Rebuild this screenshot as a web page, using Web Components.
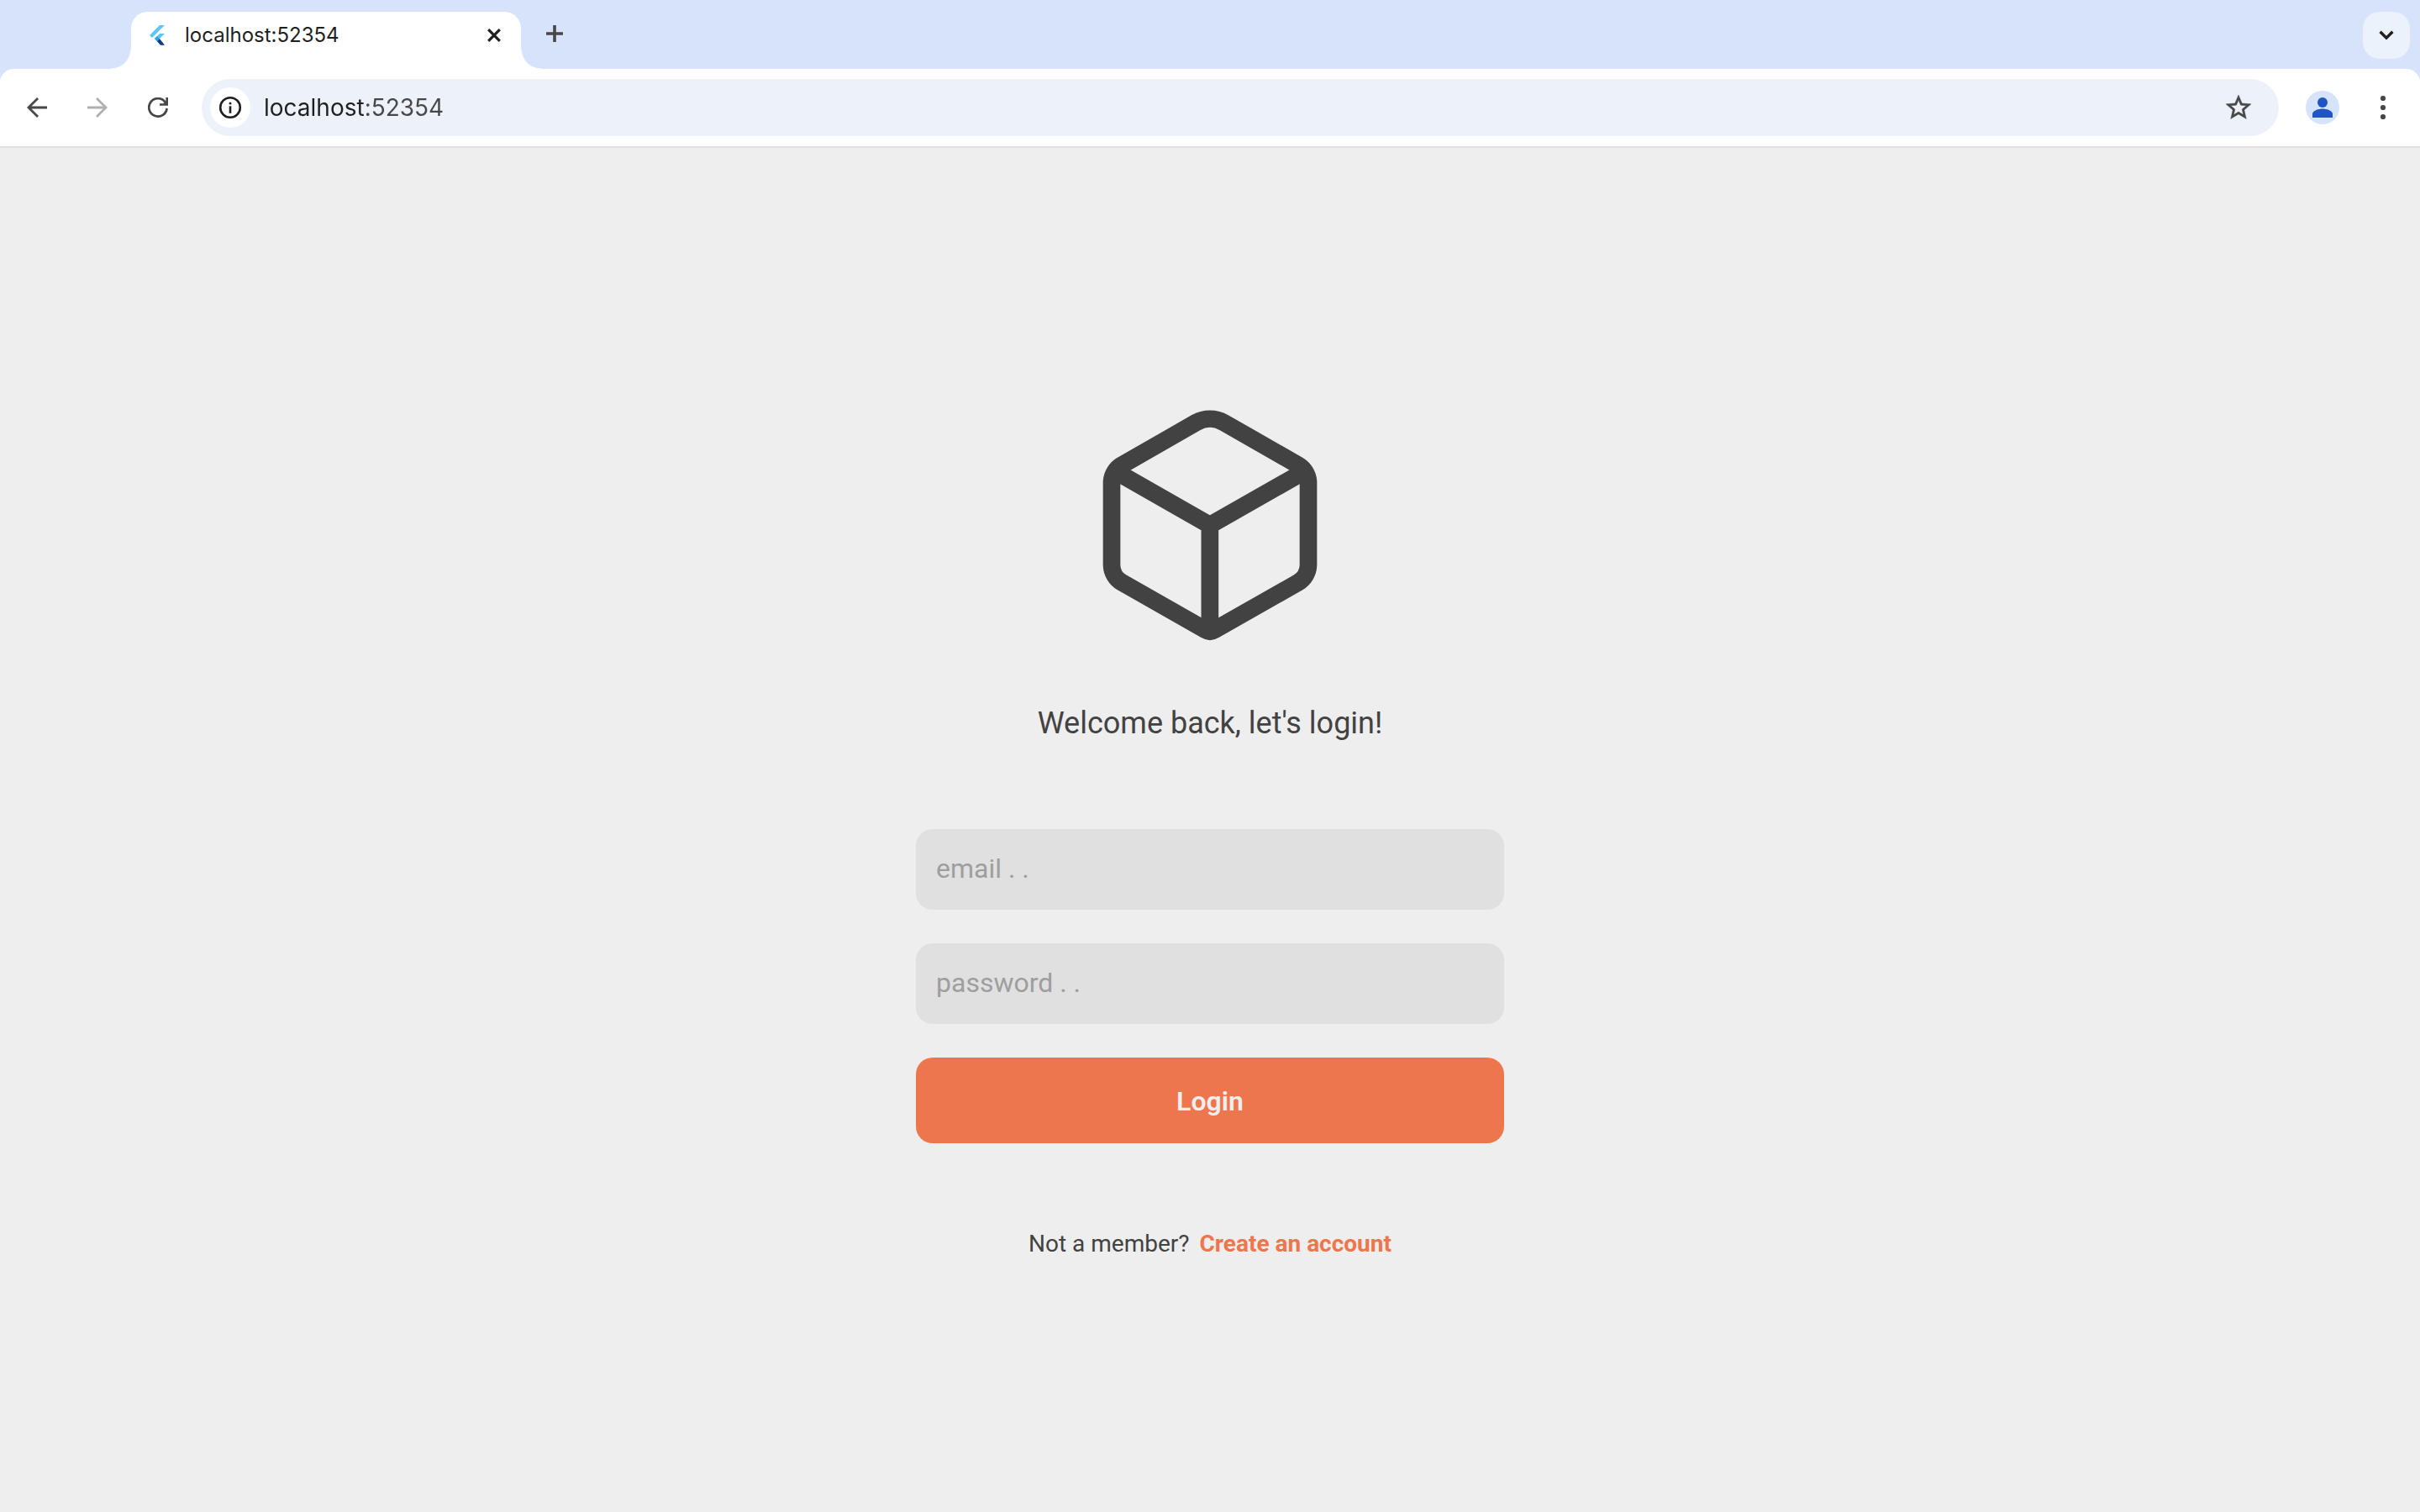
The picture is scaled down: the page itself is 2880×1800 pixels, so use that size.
<!DOCTYPE html>
<html lang="en">
<head>
<meta charset="utf-8">
<title>localhost:52354</title>
<style>
  html, body { height: 100%; margin: 0; }
  body { font-family: Roboto, sans-serif; background: #eeeeee; }
</style>
</head>
<body>
<browser-window>
  <tab-strip slot="chrome"><browser-tab>localhost:52354</browser-tab></tab-strip>
  <browser-toolbar slot="chrome"></browser-toolbar>
  <login-page>
    <login-field name="email" type="email" hint="email . ."></login-field>
    <login-field name="password" type="password" hint="password . ."></login-field>
    <submit-button>Login</submit-button>
  </login-page>
</browser-window>

<script>
const define = (name, html, setup) => {
  const template = document.createElement('template');
  template.innerHTML = html;
  customElements.define(name, class extends HTMLElement {
    constructor() {
      super();
      this.attachShadow({ mode: 'open' }).append(template.content.cloneNode(true));
    }
    connectedCallback() { if (setup) setup(this, this.shadowRoot); }
  });
};

const plainButton = `
  button { border: 0; margin: 0; padding: 0; background: none; color: inherit; font: inherit;
    display: flex; align-items: center; justify-content: center; cursor: pointer; }
  svg { display: block; }`;

define('browser-window', `
  <style>
    :host { display: flex; flex-direction: column; min-height: 100vh; }
    header { background: #d7e2fb; border-bottom: 2px solid #e1e1e1; }
    main { flex: 1; display: flex; flex-direction: column; }
  </style>
  <header><slot name="chrome"></slot></header>
  <main><slot></slot></main>`);

define('tab-strip', `
  <style>
    :host { display: flex; height: 82px; align-items: flex-end; padding: 0 12px 0 132px; box-sizing: border-box; }
    .flare { width: 24px; height: 24px; }
    .left { background: radial-gradient(circle at 0 0, transparent 23px, #fff 24px); }
    .right { background: radial-gradient(circle at 100% 0, transparent 23px, #fff 24px); }
    ${plainButton}
    .new { align-self: flex-start; width: 32px; height: 32px; margin-top: 24px; }
    .search { align-self: flex-start; width: 56px; height: 56px; margin: 14px 0 0 auto; border-radius: 20px; background: #ebf2fc; }
  </style>
  <div class="flare left"></div>
  <slot></slot>
  <div class="flare right"></div>
  <button class="new" aria-label="New tab">
    <svg width="32" height="32" viewBox="0 0 32 32" fill="none" stroke="#474747" stroke-width="3.6"><path d="M16 6v20M6 16h20"/></svg>
  </button>
  <button class="search" aria-label="Search tabs">
    <svg width="24" height="24" viewBox="0 0 24 24" fill="none" stroke="#1f1f1f" stroke-width="3.4"><path d="M4.6 7.8L12 15.2l7.4-7.4"/></svg>
  </button>`);

define('browser-tab', `
  <style>
    :host { display: flex; align-items: center; width: 464px; height: 68px; padding: 0 16px 12px;
      box-sizing: border-box; background: #fff; border-radius: 20px 20px 0 0;
      font: 24px/32px Inter, sans-serif; color: #1f1f1f; }
    .title { flex: 1; margin-left: 16px; }
    ${plainButton}
    button { width: 32px; height: 32px; }
  </style>
  <svg width="32" height="32" viewBox="0 0 32 32">
    <path fill="#5fc4f8" d="M24 4h-6L6 16l3 3z"/>
    <path fill="#5fc4f8" d="M24 14h-6l-6 6 3 3z"/>
    <path fill="#29a5ea" d="M12 20l3-3 3 3-3 3.400z"/>
    <path fill="#0d3a8c" d="M15 23.200l3-3.200 6 7.800h-5z"/>
    <path fill="#fff" d="M18 20h6v5.400z"/>
  </svg>
  <span class="title"><slot></slot></span>
  <button aria-label="Close tab">
    <svg width="32" height="32" viewBox="0 0 32 32" fill="none" stroke="#1f1f1f" stroke-width="3.2"><path d="M9.2 9.2l13.6 13.6M22.8 9.2L9.2 22.8"/></svg>
  </button>`);

define('browser-toolbar', `
  <style>
    :host { display: flex; align-items: center; gap: 16px; height: 92px; padding: 0 16px;
      box-sizing: border-box; background: #fff; border-radius: 16px 16px 0 0; color: #474747; }
    ${plainButton}
    button { width: 56px; height: 56px; flex: none; }
    button:disabled { color: #b0b0b0; }
    address-bar { flex: 1; margin: 0 8px; }
  </style>
  <button aria-label="Back">
    <svg width="24" height="24" viewBox="0 0 24 24" fill="none" stroke="currentColor" stroke-width="2.8"><path d="M24 12H2M13 1L2 12l11 11"/></svg>
  </button>
  <button aria-label="Forward" disabled>
    <svg width="24" height="24" viewBox="0 0 24 24" fill="none" stroke="currentColor" stroke-width="2.8"><path d="M0 12h22M11 1l11 11-11 11"/></svg>
  </button>
  <button aria-label="Reload">
    <svg width="24" height="24" viewBox="0 0 24 24"><path fill="none" stroke="currentColor" stroke-width="2.7" d="M22.6 13A10.7 10.7 0 1 1 20.6 5.6"/><path fill="currentColor" d="M24 0v9.8H14V7.2h4.4l3-2.6V0z"/></svg>
  </button>
  <address-bar></address-bar>
  <button aria-label="Profile">
    <svg width="40" height="40" viewBox="0 0 40 40"><circle cx="20" cy="20" r="20" fill="#d7e2fb"/><g fill="#1f55c4"><circle cx="20" cy="14" r="6"/><path d="M8 32v-4.4C8 23.4 15.6 21.4 20 21.4s12 2 12 6.2V32z"/></g></svg>
  </button>
  <button aria-label="Menu">
    <svg width="32" height="32" viewBox="0 0 32 32" fill="currentColor"><circle cx="16" cy="5" r="3.1"/><circle cx="16" cy="16" r="3.1"/><circle cx="16" cy="27" r="3.1"/></svg>
  </button>`);

define('address-bar', `
  <style>
    :host { display: flex; align-items: center; height: 68px; padding: 0 20px 0 10px; box-sizing: border-box;
      background: #edf2fa; border-radius: 34px; --host-width: 120px; }
    ${plainButton}
    .info { width: 48px; height: 48px; border-radius: 24px; background: #fff; }
    .star { width: 56px; height: 56px; color: #474747; }
    input { flex: 1; min-width: 0; height: 40px; margin-left: 16px; padding: 0; border: 0; outline: 0;
      font: 28px/40px Inter, sans-serif; color: #1f1f1f; caret-color: #1f1f1f;
      background: linear-gradient(to right, #1f1f1f var(--host-width), #474747 var(--host-width));
      -webkit-background-clip: text; background-clip: text; -webkit-text-fill-color: transparent; }
  </style>
  <button class="info" aria-label="Site information">
    <svg width="32" height="32" viewBox="0 0 32 32"><circle cx="16" cy="16" r="11.8" fill="none" stroke="#1f1f1f" stroke-width="2.6"/><circle cx="16" cy="11" r="1.5" fill="#1f1f1f"/><path d="M16 14.3v8.500" stroke="#1f1f1f" stroke-width="2.6"/></svg>
  </button>
  <input type="text" aria-label="Address" value="localhost:52354" spellcheck="false">
  <button class="star" aria-label="Bookmark this page">
    <svg width="36" height="36" viewBox="0 0 24 24" fill="currentColor" stroke="currentColor" stroke-width=".3"><path d="M22 9.24l-7.19-.62L12 2 9.19 8.63 2 9.24l5.46 4.73L5.82 21 12 17.27 18.18 21l-1.63-7.03L22 9.24zM12 15.4l-3.76 2.27 1-4.28-3.32-2.88 4.38-.38L12 6.1l1.71 4.04 4.38.38-3.32 2.88 1 4.28L12 15.4z"/></svg>
  </button>`);

define('login-page', `
  <style>
    :host { flex: 1; display: flex; align-items: center; justify-content: center; color: #424242; }
    form { width: 700px; max-width: 90%; display: flex; flex-direction: column; align-items: center; }
    svg { display: block; }
    h1 { margin: 60px 0 100px; font: 400 36px/52px Roboto, sans-serif; }
    .fields { align-self: stretch; display: flex; flex-direction: column; gap: 40px; }
    p { display: flex; gap: 12px; margin: 100px 0 0; font: 28px/40px Roboto, sans-serif; }
    a { color: #ee764d; font-weight: 700; text-decoration: none; }
  </style>
  <form>
    <svg width="300" height="300" viewBox="0 15 900 900" fill="none" stroke="#424242" stroke-width="62" stroke-linejoin="round" aria-hidden="true">
      <path d="M135 251L399 100A102 102 0 0 1 501 100L765 251A74 74 0 0 1 801 309V609A74 74 0 0 1 765 670L466 840Q450 850 434 840L135 670A74 74 0 0 1 99 609V309A74 74 0 0 1 135 251z"/>
      <path d="M112 273L449.5 466 788 273M449.5 466V840"/>
    </svg>
    <h1>Welcome back, let's login!</h1>
    <div class="fields"><slot></slot></div>
    <p><span>Not a member?</span><a href="#register">Create an account</a></p>
  </form>`);

define('login-field', `
  <style>
    :host { display: block; }
    input { display: block; width: 100%; height: 96px; padding: 0 24px 2px; border: 0; border-radius: 20px; outline: 0;
      box-sizing: border-box; background: #e0e0e0; color: #424242; font: 32px/48px Roboto, sans-serif; }
    input::placeholder { color: #9e9e9e; opacity: 1; }
  </style>
  <input>`, (host, root) => {
    const input = root.querySelector('input');
    input.type = host.getAttribute('type');
    input.name = host.getAttribute('name');
    input.placeholder = host.getAttribute('hint');
    input.setAttribute('aria-label', host.getAttribute('name'));
  });

define('submit-button', `
  <style>
    :host { display: block; }
    button { display: block; width: 100%; height: 102px; border: 0; padding: 2px 0 0; border-radius: 20px; cursor: pointer;
      background: #ee764d; color: #eeeeee; font: 600 32px/48px Roboto, sans-serif; }
  </style>
  <button type="submit"><slot></slot></button>`);
</script>
</body>
</html>
